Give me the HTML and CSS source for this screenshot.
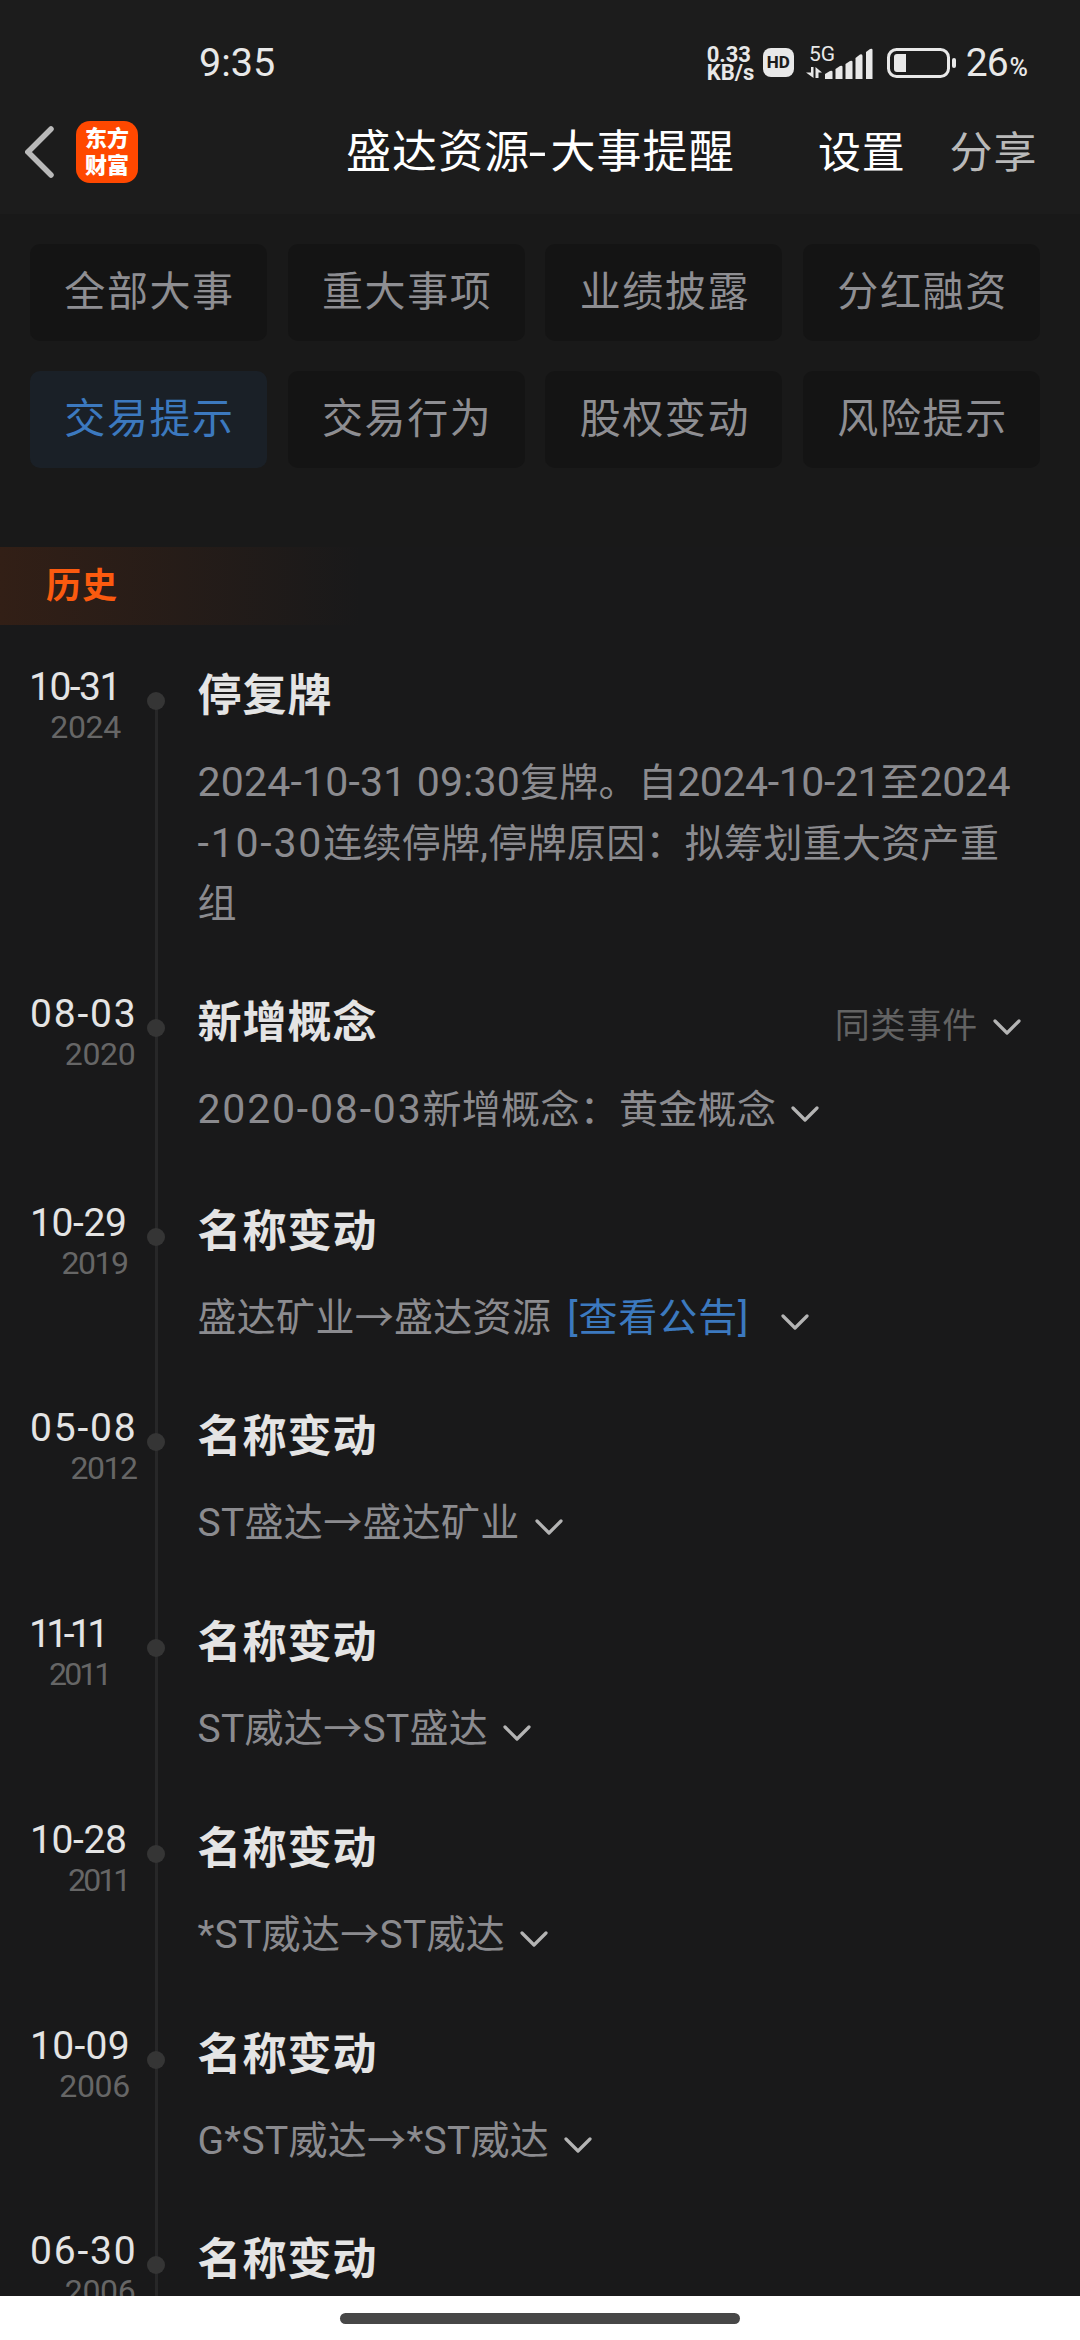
FILE: index.html
```html
<!DOCTYPE html>
<html lang="zh-CN">
<head>
  <meta charset="UTF-8" />
  <meta name="viewport" content="width=device-width, initial-scale=1.0" />
  <title>盛达资源-大事提醒</title>
  <link rel="stylesheet" href="styles.css">
</head>
<body>

  <svg class="sprite" width="0" height="0">
    <symbol id="chevron" viewBox="0 0 28 16">
      <path d="M2 2 L14 14 L26 2" fill="none" stroke="#b4b4b4" stroke-width="3.2" stroke-linecap="round" stroke-linejoin="round"/>
    </symbol>
  </svg>

  <header class="header">
    <div class="status-bar">
      <div class="clock">9:35</div>
      <div class="status-icons">
        <div class="speed"><span>0.33</span><span>KB/s</span></div>
        <div class="hd">HD</div>
        <svg class="signal" width="68" height="48" viewBox="0 -6 68 48" fill="#e8e8e8">
          <text x="3" y="17" font-size="21">5G</text>
          <path d="M5 23 H7.5 V34 L0 28.5 H5 Z"/>
          <path d="M9.500 34 V23 L16 28.500 H12.500 V34 Z"/>
          <path d="M19 35 V30 L24 27 Q26.500 26 26.500 28 V35 Z"/>
          <path d="M29.500 35 V25 L34 22 Q36.500 21 36.500 23 V35 Z"/>
          <path d="M39.500 35 V20 L44 17 Q46.500 16 46.500 18 V35 Z"/>
          <path d="M49.500 35 V14 L54 10.500 Q56.500 9.500 56.500 12 V35 Z"/>
          <path d="M60 35 V8 L64 5 Q66.500 4 66.500 6 V35 Z"/>
        </svg>
        <svg class="battery" width="70" height="30" viewBox="0 0 70 30">
          <rect x="1.500" y="1.500" width="60" height="27" rx="8" fill="none" stroke="#e8e8e8" stroke-width="3"/>
          <path d="M10 6 H19 V24 H10 Q7 24 7 21 V9 Q7 6 10 6 Z" fill="#e8e8e8"/>
          <rect x="65" y="10" width="4" height="10" rx="2" fill="#e8e8e8"/>
        </svg>
        <div class="percent">26<small>%</small></div>
      </div>
    </div>

    <div class="nav-bar">
      <svg class="back" width="30" height="52" viewBox="0 0 30 52">
        <path d="M26 3 L3 26 L26 49" fill="none" stroke="#b9b9b9" stroke-width="5.500" stroke-linecap="round" stroke-linejoin="miter"/>
      </svg>
      <div class="logo"><span>东方</span><span>财富</span></div>
      <h1>盛达资源<i>-</i>大事提醒</h1>
      <a class="action primary">设置</a>
      <a class="action">分享</a>
    </div>
  </header>

  <div class="tabs">
    <div class="tab">全部大事</div>
    <div class="tab">重大事项</div>
    <div class="tab">业绩披露</div>
    <div class="tab">分红融资</div>
    <div class="tab active">交易提示</div>
    <div class="tab">交易行为</div>
    <div class="tab">股权变动</div>
    <div class="tab">风险提示</div>
  </div>

  <div class="history">历史</div>

  <div class="timeline">
    <div class="item first">
      <div class="date"><b class="narrow">10-31</b><span>2024</span></div>
      <div class="content">
        <div class="title"><h2>停复牌</h2></div>
        <div class="desc">
          <p><span class="num">2024-10-31 09:30</span>复牌。自<span class="num tight">2024-10-21</span>至<span class="num tight">2024</span></p>
          <p><span class="num wide">-10-30</span>连续停牌,停牌原因：拟筹划重大资产重</p>
          <p>组</p>
        </div>
      </div>
    </div>

    <div class="item similar">
      <div class="date"><b>08-03</b><span>2020</span></div>
      <div class="content">
        <div class="title">
          <h2>新增概念</h2>
          <div class="more">同类事件<svg class="chevron"><use href="#chevron"/></svg></div>
        </div>
        <div class="desc"><p><span class="num wide">2020-08-03</span>新增概念：黄金概念<svg class="chevron"><use href="#chevron"/></svg></p></div>
      </div>
    </div>

    <div class="item">
      <div class="date"><b class="mid">10-29</b><span class="y1">2019</span></div>
      <div class="content">
        <div class="title"><h2>名称变动</h2></div>
        <div class="desc"><p>盛达矿业→盛达资源<a class="link">[查看公告]</a><svg class="chevron"><use href="#chevron"/></svg></p></div>
      </div>
    </div>

    <div class="item">
      <div class="date"><b>05-08</b><span class="y1">2012</span></div>
      <div class="content">
        <div class="title"><h2>名称变动</h2></div>
        <div class="desc"><p>ST盛达→盛达矿业<svg class="chevron"><use href="#chevron"/></svg></p></div>
      </div>
    </div>

    <div class="item">
      <div class="date"><b class="slim">11-11</b><span class="y2">2011</span></div>
      <div class="content">
        <div class="title"><h2>名称变动</h2></div>
        <div class="desc"><p>ST威达→ST盛达<svg class="chevron"><use href="#chevron"/></svg></p></div>
      </div>
    </div>

    <div class="item">
      <div class="date"><b class="mid">10-28</b><span class="y2">2011</span></div>
      <div class="content">
        <div class="title"><h2>名称变动</h2></div>
        <div class="desc"><p>*ST威达→ST威达<svg class="chevron"><use href="#chevron"/></svg></p></div>
      </div>
    </div>

    <div class="item">
      <div class="date"><b class="mid loose">10-09</b><span>2006</span></div>
      <div class="content">
        <div class="title"><h2>名称变动</h2></div>
        <div class="desc"><p>G*ST威达→*ST威达<svg class="chevron"><use href="#chevron"/></svg></p></div>
      </div>
    </div>

    <div class="item">
      <div class="date"><b>06-30</b><span>2006</span></div>
      <div class="content">
        <div class="title"><h2>名称变动</h2></div>
      </div>
    </div>
  </div>

  <footer class="home-bar"><div class="handle"></div></footer>

</body>
</html>
```
FILE: styles.css
```css
* {
  box-sizing: border-box;
  margin: 0;
  padding: 0;
}

body {
  width: 1080px;
  height: 2340px;
  overflow: hidden;
  display: flex;
  flex-direction: column;
  background: #19191a;
  color: #e4e4e4;
  font-family: Roboto, "Noto Sans CJK SC", sans-serif;
}

.sprite {
  position: absolute;
}

/* header */
.header {
  flex: none;
  height: 214px;
  background: #1c1c1c;
}

.status-bar {
  height: 100px;
  padding: 25px 53px 0 199px;
  display: flex;
  justify-content: space-between;
  align-items: center;
  color: #e8e8e8;
}

.clock {
  font-size: 39.5px;
}

.status-icons {
  display: flex;
  align-items: center;
}

.speed {
  display: flex;
  flex-direction: column;
  width: 56px;
  margin-top: 2px;
  font-size: 22px;
  font-weight: 700;
  line-height: 18px;
}

.hd {
  width: 31px;
  height: 29px;
  margin-right: 12px;
  border-radius: 8px;
  background: #e8e8e8;
  color: #1c1c1c;
  font-size: 17px;
  font-weight: 800;
  line-height: 29px;
  text-align: center;
}

.signal {
  margin: -2px 13px 0 0;
}

.battery {
  margin-right: 14px;
}

.battery + .percent {
  margin-left: -5px;
}

.percent {
  font-size: 39px;
  letter-spacing: -1px;
}

.percent small {
  margin-left: 2px;
  font-size: 25px;
  font-weight: 500;
}

.nav-bar {
  display: flex;
  align-items: center;
  height: 104px;
  padding-left: 25px;
}

.logo {
  display: flex;
  flex-direction: column;
  align-items: center;
  justify-content: center;
  width: 62px;
  height: 62px;
  margin-left: 21px;
  padding-bottom: 1px;
  border-radius: 14px;
  background: #ff4800;
  color: #fff;
  font-size: 22px;
  font-weight: 900;
  line-height: 27px;
}

.nav-bar h1 {
  width: 391px;
  margin-left: 208px;
  padding-bottom: 7px;
  color: #fff;
  font-size: 45px;
  font-weight: 400;
  letter-spacing: 1.1px;
  white-space: nowrap;
}

.nav-bar h1 i {
  display: inline-block;
  width: 20px;
  padding-left: 2px;
  font-style: normal;
  transform: scaleX(1.4);
}

.action {
  margin-left: 44px;
  padding-bottom: 7px;
  color: #b9b9b9;
  font-size: 43px;
  letter-spacing: 0.8px;
}

.action.primary {
  margin-left: 81px;
  color: #fff;
}

/* category tabs */
.tabs {
  flex: none;
  display: grid;
  grid-template-columns: repeat(4, 237px);
  gap: 30px 20.7px;
  padding: 30px 30px 79px;
  background: #191919;
}

.tab {
  height: 97px;
  padding-left: 2px;
  border-radius: 10px;
  background: #141414;
  color: #8e8e92;
  font-size: 41px;
  letter-spacing: 1.6px;
  line-height: 97px;
  text-align: center;
}

.tab.active {
  background: #1a2027;
  color: #3c79bf;
}

.history {
  flex: none;
  height: 78px;
  padding-left: 46px;
  background: linear-gradient(to right, #321f16, #19191a 360px);
  color: #fb5a0f;
  font-size: 35px;
  font-weight: 700;
  letter-spacing: 1px;
  line-height: 79px;
}

/* timeline */
.timeline {
  flex: 1;
  min-height: 0;
  overflow: hidden;
  padding-top: 39px;
}

.item {
  position: relative;
  display: flex;
  height: 205.8px;
}

.item.first {
  height: 327px;
}

.item.similar {
  height: 208.5px;
}

/* vertical rule behind the dots */
.item::before {
  content: "";
  position: absolute;
  left: 155px;
  top: 0;
  width: 3px;
  height: 100%;
  background: #272728;
}

.item.first::before {
  top: 37px;
  height: 290px;
}

.item::after {
  content: "";
  position: absolute;
  left: 147px;
  top: 28px;
  width: 18px;
  height: 18px;
  border-radius: 50%;
  background: #353535;
}

.date {
  display: flex;
  flex-direction: column;
  align-items: flex-end;
  align-self: flex-start;
  width: max-content;
  margin-left: 30px;
  padding-top: 1px;
}

.content {
  position: absolute;
  left: 197.500px;
  right: 0;
}

.date b {
  margin-right: -2px;
  font-size: 39px;
  font-weight: 400;
  letter-spacing: 1.8px;
  line-height: 44px;
}

.date .mid {
  letter-spacing: -0.4px;
  margin-right: 0;
}

.date .mid.loose {
  letter-spacing: 0.3px;
}

.date .narrow {
  margin-left: -1px;
  letter-spacing: -1.5px;
  margin-right: 1px;
}

.date .slim {
  margin-left: -1px;
  letter-spacing: -4.6px;
  margin-right: 3px;
}

.date span {
  color: #666;
  font-size: 32px;
  letter-spacing: -0.3px;
  line-height: 36px;
}

.date .y1 {
  letter-spacing: -1.5px;
  margin-right: -1px;
}

.date .y2 {
  letter-spacing: -2.9px;
  margin-right: -2px;
}

.title {
  display: flex;
  justify-content: space-between;
  align-items: center;
  height: 62px;
  padding-right: 59px;
}

.title h2 {
  padding-top: 2px;
  font-size: 44px;
  font-weight: 700;
  letter-spacing: 1px;
  line-height: 62px;
}

.more {
  color: #636363;
  font-size: 35px;
  letter-spacing: 0.8px;
}

.more .chevron {
  position: relative;
  top: -3px;
}

.desc {
  margin-top: 26px;
  color: #8b8b8f;
  font-size: 39px;
  letter-spacing: 0.3px;
  line-height: 60.5px;
  white-space: nowrap;
}

.first .desc {
  line-height: 60px;
}

.num {
  font-size: 41px;
  letter-spacing: 0.2px;
}

.num.tight {
  letter-spacing: -0.4px;
}

.num.wide {
  letter-spacing: 1.8px;
}

.link {
  margin-left: 16px;
  margin-right: 17px;
  color: #3c79bf;
  letter-spacing: 0.9px;
}

.chevron {
  width: 28px;
  height: 16px;
  margin-left: 15px;
}

.desc .chevron {
  position: relative;
  top: -1px;
}

/* gesture bar */
.home-bar {
  flex: none;
  display: flex;
  justify-content: center;
  height: 44px;
  padding-top: 17px;
  background: #fff;
}

.handle {
  width: 400px;
  height: 11px;
  border-radius: 6px;
  background: #474747;
}
```
